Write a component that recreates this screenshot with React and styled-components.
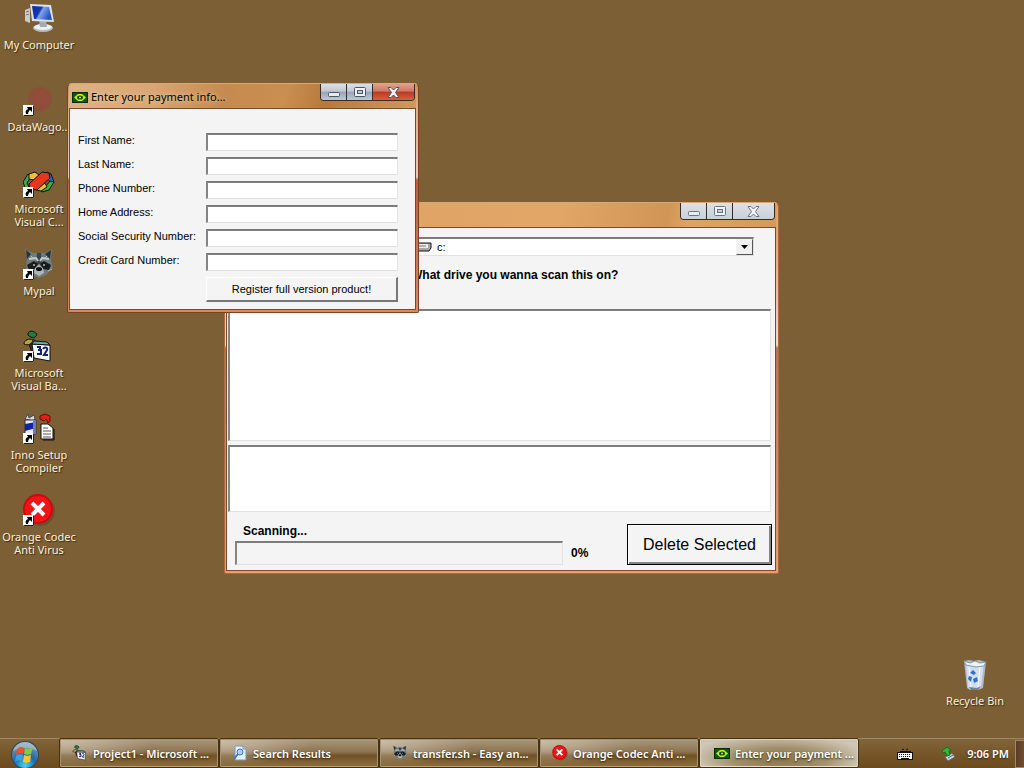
import React from "react";
import styled, { createGlobalStyle, css } from "styled-components";

const SEGOE = '"Noto Sans", "Open Sans", sans-serif';
const CLASSIC = '"Liberation Sans", Arial, sans-serif';

const GlobalStyle = createGlobalStyle`
  * { box-sizing: border-box; }
  body { margin: 0; background: #7c5f35; }
  button, input, select { font: inherit; color: inherit; margin: 0; }
`;

const Screen = styled.div`
  min-height: 100vh;
  display: flex;
  flex-direction: column;
  background: #7c5f35;
  font-family: ${SEGOE};
  font-size: 11px;
`;

const Desktop = styled.main`
  position: relative;
  flex: 1;
  display: flex;
  justify-content: space-between;
`;

const IconColumn = styled.div`
  display: flex;
  flex-direction: column;
  justify-content: ${(p) => (p.$bottom ? "flex-end" : "flex-start")};
  padding-right: ${(p) => (p.$bottom ? "10px" : "0")};
`;

const Shortcut = styled.a`
  width: 78px;
  height: 82px;
  padding-top: 2px;
  display: flex;
  flex-direction: column;
  align-items: center;
  gap: 3px;
  color: #fbf1dc;
  text-decoration: none;
  text-align: center;
  line-height: 13px;
  white-space: pre;
  text-shadow: 1px 1px 1px #3c2a10;

  svg { flex: none; }
`;

/* ---------- windows ---------- */

const Window = styled.section`
  position: absolute;
  left: ${(p) => p.$x}px;
  top: ${(p) => p.$y}px;
  width: ${(p) => p.$w}px;
  padding: 0 2px 2px 1px;
  border: 1px solid ${(p) => (p.$active ? "#80401f" : "#b0683f")};
  border-top-color: #d8a878;
  border-radius: 5px 5px 2px 2px;
  background: ${(p) =>
    p.$active
      ? "linear-gradient(#cd9256 0, #dcb48c 26px, #e6cdbb 93px, #b9613f 96px, #d58a62 100%)"
      : "linear-gradient(#dfa363 0, #dfa76c 24px, #f0dccb 142px, #bf7058 145px, #e8a070 100%)"};
  color: #000;
`;

const TitleBar = styled.header`
  height: ${(p) => (p.$active ? 24 : 24)}px;
  display: flex;
  align-items: flex-start;
  justify-content: space-between;
  padding: 0 1px 0 3px;
  border-radius: 4px 4px 0 0;
  background: ${(p) =>
    p.$active
      ? "linear-gradient(100deg, #dcb386 0, #d9a673 24%, #c58a4f 45%, #c98f50 62%, #b67b3c 74%, #d09a5c 100%)"
      : "linear-gradient(100deg, #dba265 0, #e2a767 60%, #cf9656 80%, #dfa465 84%, #d39a5b 100%)"};
`;

const Title = styled.h1`
  margin: 0;
  padding-top: 5px;
  display: flex;
  align-items: center;
  gap: 3px;
  font-size: 11px;
  line-height: 16px;
  font-weight: 400;
  text-shadow: 0 0 4px #f3dcc0;
`;

const Captions = styled.div`
  display: flex;
  margin-left: auto;
  border: 1px solid #3a2a28;
  border-top: 0;
  border-radius: 0 0 4px 4px;
  overflow: hidden;
`;

const CaptionButton = styled.button`
  width: ${(p) => (p.$wide ? 41 : 26)}px;
  height: 16px;
  padding: 0;
  display: grid;
  place-items: center;
  border: 0;
  border-right: ${(p) => (p.$wide ? "0" : "1px solid #3a2a28")};
  background: ${(p) =>
    !p.$active
      ? "linear-gradient(#dde1e6, #c9d0d9)"
      : p.$wide
      ? "linear-gradient(#e0a090 0, #cf7660 45%, #b93a22 50%, #d9603f 100%)"
      : "linear-gradient(#dcdfe6 0, #c3c6ce 45%, #9aa3b5 50%, #bccadb 100%)"};
`;

const Client = styled.div`
  border: 1px solid #7d4a2a;
  background: #f4f4f4;
  font-family: ${CLASSIC};
`;

const sunken = css`
  border: 1px solid #e2e2e2;
  border-top: 2px solid #7c7c7c;
  border-left: 2px solid #858585;
  border-radius: 0;
  outline: 0;
`;

const PaymentForm = styled.form`
  display: grid;
  grid-template-columns: 128px 1fr;
  row-gap: 6px;
  padding: 24px 17px 7px 8px;
`;

const FieldLabel = styled.label`
  line-height: 14px;
`;

const TextBox = styled.input`
  ${sunken}
  width: 100%;
  height: 18px;
  padding: 0 2px;
  background: #fff;
`;

const RegisterButton = styled.button`
  grid-column: 2;
  height: 25px;
  padding: 0;
  border: 1px solid #fff;
  border-right: 2px solid #777;
  border-bottom: 2px solid #777;
  background: #f4f4f4;
`;

const ScanPanel = styled(Client)`
  display: flex;
  flex-direction: column;
  padding: 9px 0 5px;
`;

const DriveRow = styled.div`
  display: flex;
  flex-direction: column;
  gap: 12px;
  margin: 0 21px 27px 184px;
`;

const DriveBox = styled.div`
  ${sunken}
  height: 19px;
  display: flex;
  align-items: center;
  background: #fff;
`;

const DriveSelect = styled.select`
  flex: 1;
  min-width: 0;
  height: 16px;
  padding: 0 5px;
  border: 0;
  outline: 0;
  appearance: none;
  background: transparent;
  line-height: 16px;
`;

const DropArrow = styled.span`
  width: 17px;
  height: 16px;
  display: grid;
  place-items: center;
  border: 1px solid #f4f4f4;
  border-right-color: #555;
  border-bottom-color: #555;
  background: #f0f0f0;
`;

const BoldText = styled.label`
  font-size: 12px;
  line-height: 14px;
  font-weight: 700;
`;

const ListBox = styled.select`
  ${sunken}
  display: block;
  height: ${(p) => p.$h}px;
  margin: 0 4px 4px 1px;
  appearance: none;
  background: #fff;
`;

const ScanFooter = styled.div`
  display: flex;
  padding: 8px 3px 0 8px;
`;

const ScanStatus = styled.div`
  flex: 1;
  display: flex;
  flex-direction: column;
  gap: 3px;

  > label { padding-left: 8px; }
`;

const ProgressRow = styled.div`
  display: flex;
  align-items: center;
  gap: 8px;
`;

const Progress = styled.progress`
  ${sunken}
  flex: 1;
  width: 0;
  height: 24px;
  appearance: none;
  background: #f4f4f4;

  &::-webkit-progress-bar { background: transparent; }
  &::-webkit-progress-value { background: #000080; }
`;

const Percent = styled.output`
  width: 56px;
  font-size: 12px;
  font-weight: 700;
`;

const DeleteButton = styled.button`
  width: 145px;
  height: 41px;
  padding: 0;
  border: 1px solid #000;
  background: #f4f4f4;
  box-shadow: inset 1px 1px #fff, inset -2px -2px #858585;
  font-size: 16px;
`;

/* ---------- taskbar ---------- */

const Taskbar = styled.footer`
  height: 30px;
  display: flex;
  align-items: stretch;
  border-top: 1px solid #9d8662;
  background: linear-gradient(#82643a, #76572a 50%, #6b4b1e);
  color: #fff;
`;

const StartButton = styled.button`
  width: 60px;
  padding: 0 0 0 11px;
  display: flex;
  align-items: flex-start;
  border: 0;
  background: none;
`;

const Tasks = styled.nav`
  flex: 1;
  min-width: 0;
  display: flex;
  gap: 2px;
`;

const TaskButton = styled.button`
  flex: 0 1 158px;
  min-width: 0;
  height: 28px;
  padding: 0 8px 0 ${(p) => (p.$active ? 13 : 11)}px;
  display: flex;
  align-items: center;
  gap: 5px;
  border: 1px solid ${(p) => (p.$active ? "#d9d2c4" : "#a89373")};
  border-bottom-color: ${(p) => (p.$active ? "#e6dfd0" : "#b8a078")};
  border-radius: 1px;
  outline: 1px solid #46300f;
  background: ${(p) =>
    p.$active
      ? "radial-gradient(ellipse 60% 90% at 50% 75%, #8a7449 0, #a0906c 50%, transparent 100%), linear-gradient(#cbc2b0, #e0dacd)"
      : "radial-gradient(ellipse 60% 100% at 0 0, #c9bda8 0, transparent 100%), linear-gradient(#a8967a 0, #8c7350 45%, #705226 60%, #8a6c3d 100%)"};
  font-weight: 600;
  text-shadow: 0 1px 2px #2f1f08;
  white-space: nowrap;

  svg { flex: none; }
`;

const Tray = styled.div`
  display: flex;
  align-items: center;
  font-weight: 600;
  text-shadow: 0 1px 2px #2f1f08;

  > svg { margin-right: 28px; }
  > svg + svg { margin-right: 10px; }
`;

const ShowDesktop = styled.button`
  width: 9px;
  height: 28px;
  margin-left: 6px;
  padding: 0;
  border: 1px solid #a08a66;
  border-right: 0;
  background: linear-gradient(90deg, #5a3b26, #6f4e30);
`;

/* ---------- drawings ---------- */

const ArrowBadge = () => (
  <g>
    <rect x="0" y="21" width="11" height="11" fill="#fff" />
    <path d="M.5 31.500h10v-10" fill="none" stroke="#222" />
    <path d="M4 23h5v5l-2-2c-1 1-2 2-2 4H3c-1-3 0-4 2-5z" fill="#000" />
  </g>
);

const Icon = ({ children, badge = true }) => (
  <svg width="32" height="33" viewBox="0 0 32 33" aria-hidden="true">
    {children}
    {badge && <ArrowBadge />}
  </svg>
);

const ComputerIcon = () => (
  <Icon badge={false}>
    <defs>
      <linearGradient id="screen" x1="0" y1="0" x2="1" y2=".4">
        <stop offset="0" stopColor="#0c2c98" />
        <stop offset=".45" stopColor="#1238b8" />
        <stop offset=".55" stopColor="#7ea6ec" />
        <stop offset="1" stopColor="#2450cc" />
      </linearGradient>
    </defs>
    <path d="M2 8l5-2v15l-5-2z" fill="#c5ccd2" />
    <path d="M3 10l3-1M3 13l3-1" stroke="#6d7780" />
    <ellipse cx="20" cy="26" rx="10" ry="4" fill="#b6bbbf" />
    <ellipse cx="20" cy="25" rx="9" ry="3" fill="#eef1f3" />
    <path d="M16 18h7l1 7h-7z" fill="#a4abb2" />
    <path d="M7 2l21 1 3 17-22-1z" fill="#dbe1e6" />
    <path d="M9 4l17 1 3 13-18-1z" fill="url(#screen)" />
  </Icon>
);

const DataIcon = () => (
  <Icon>
    <circle cx="17" cy="15" r="12" fill="#93483a" opacity=".7" />
    <circle cx="18" cy="15" r="8" fill="#a04b3f" opacity=".4" />
  </Icon>
);

const VisualCIcon = () => (
  <Icon>
    <g stroke="#111" strokeWidth="1" strokeLinejoin="round">
      <path d="M0 16l5-8 3 2-4 7 3 6-4 1z" fill="#38b04a" />
      <path d="M6 8l6-2 4 3-5 5-5-1z" fill="#f2c038" />
      <path d="M24 6l4 2 3 8-3 2-4-7z" fill="#2468d8" />
      <path d="M31 16l-5 8-7 2-2-4 6-2 4-5z" fill="#3fae45" />
      <path d="M16 20l6-3 2 4-6 4-5-1z" fill="#f2c038" />
      <path d="M6 18L19 6l7 1 1 5-13 12-7-1z" fill="#e8361c" />
    </g>
  </Icon>
);

const RaccoonFace = () => (
  <g>
    <path d="M2 1l8 4h12l7-4-1 11 2 7-7 8-7 3-7-3-6-8 1-8z" fill="#6e7c80" />
    <path d="M3 2l5 4-4 5zM28 2l-6 4 5 5z" fill="#28343a" />
    <path d="M14 5h4l1 11h-6z" fill="#3a4449" />
    <path d="M6 11l7-1 2 3M26 11l-7-1-2 3" fill="none" stroke="#c3cbc9" strokeWidth="2" />
    <path d="M4 17l7-4 4 3-3 5-6 1zM28 17l-7-4-4 3 3 5 6 1z" fill="#161c20" />
    <circle cx="11" cy="17" r="1" fill="#c8b890" />
    <circle cx="21" cy="17" r="1" fill="#c8b890" />
    <path d="M12 20l4-3 4 3 1 5-5 3-5-3z" fill="#aeb7b4" />
    <ellipse cx="16" cy="21" rx="3" ry="2" fill="#0a0a0a" />
    <path d="M3 21l4 2M29 21l-4 2M8 8l2 2M24 8l-2 2" stroke="#b7c0be" />
  </g>
);

const VisualBasicArt = () => (
  <g>
    <path d="M6 14l3 9h5l-2-10z" fill="#5c1d1d" stroke="#111" />
    <path d="M5 3c2-3 6-2 9 1-1 4-5 5-9 1z" fill="#267a3d" stroke="#111" />
    <path d="M1 14c0-4 5-6 9-4-1 4-5 6-9 4z" fill="#b8a04a" stroke="#111" />
    <path d="M10 9l4 3" stroke="#111" />
    <path d="M9 14l18 1v16l-16-3z" fill="#f4fafa" stroke="#111" />
    <path d="M9 14l18 1-3-3-13-1z" fill="#57b7b0" stroke="#111" />
    <path d="M14 17h3v3h-2h3v4h-4M20 19c2-3 5-1 4 1l-3 5h4" fill="none" stroke="#18206e" strokeWidth="2" />
  </g>
);

const InnoIcon = () => (
  <Icon>
    <path d="M2 7l3-5 1 4 5-3 1 4-2 2z" fill="#d9dce8" stroke="#445" />
    <path d="M2 8h11v14H2z" fill="#e8eaf2" stroke="#333" />
    <path d="M2 12l11-2v6l-11 3z" fill="#1423b0" />
    <path d="M10 8h3v14h-3z" fill="#7078b8" />
    <path d="M17 4l5-2 5 2v5l-2 2-2-4-2 2-4-2z" fill="#e51c12" stroke="#5a1008" />
    <path d="M18 12h7l5 4v11H18z" fill="#fff" stroke="#111" />
    <path d="M20 16h5M20 19h8M20 22h8M20 25h8" stroke="#555" />
    <path d="M31 17v11H20" fill="none" stroke="#111" />
  </Icon>
);

const ErrorArt = () => (
  <g>
    <circle cx="17" cy="17" r="15" fill="#5c4630" opacity=".6" />
    <circle cx="15" cy="15" r="15" fill="#d3060c" />
    <circle cx="15" cy="15" r="13" fill="#ee1519" />
    <path d="M9 9l12 12M21 9L9 21" stroke="#fff" strokeWidth="4" />
  </g>
);

const BinIcon = () => (
  <Icon badge={false}>
    <path d="M5 3l5-1 5 1 5-1 7 2-3 26-5 2H11l-3-2z" fill="#a9bccd" />
    <path d="M7 6l18-1-3 24-4 2h-7l-2-2z" fill="#d2dfeb" />
    <path d="M5 3l6 2 5-2 5 2 6-1-2 4-8 1-10-2z" fill="#eef3f6" stroke="#8797a5" />
    <path d="M10 9l2 20M21 9l-2 20" stroke="#f7fbff" />
    <path d="M11 15l3-3 3 3-2 2zM10 18l3 1-1 5-3-3zM14 21l4-2 1 4-4 2z" fill="#2f6fd0" />
    <path d="M10 29l8 1 4-2-3 4h-7z" fill="#738390" />
  </Icon>
);

const EyeIcon = () => (
  <svg width="16" height="11" viewBox="0 0 16 11" aria-hidden="true">
    <rect x=".5" y=".5" width="15" height="10" fill="#0a5a14" stroke="#052d08" />
    <path d="M2 5.500L6 2h4l4 3.500L10 9H6z" fill="#c8e81e" />
    <ellipse cx="8" cy="5.500" rx="3" ry="2" fill="#0c4a12" />
    <circle cx="8" cy="5.500" r="1" fill="#d9e81e" />
  </svg>
);

const SmallIcon = ({ children, box = "0 0 32 33" }) => (
  <svg width="16" height="16" viewBox={box} aria-hidden="true">
    {children}
  </svg>
);

const SearchPageArt = () => (
  <g>
    <path d="M3 1h8l3 3v11H3z" fill="#e6f0fa" stroke="#7a98b8" />
    <path d="M11 1v3h3" fill="#b6d0ea" stroke="#7a98b8" />
    <circle cx="8" cy="7" r="3" fill="#a9d2f5" stroke="#3d78b8" />
    <path d="M6 9l-4 5" stroke="#3d78b8" strokeWidth="2" />
  </g>
);

const StartOrb = () => (
  <svg width="30" height="29" viewBox="0 0 30 29" aria-hidden="true">
    <defs>
      <radialGradient id="orb" cx=".5" cy=".9" r=".9">
        <stop offset="0" stopColor="#45d8f5" />
        <stop offset=".45" stopColor="#1c6aa8" />
        <stop offset="1" stopColor="#8a9eae" />
      </radialGradient>
    </defs>
    <circle cx="14" cy="16" r="14" fill="#2c4458" />
    <circle cx="14" cy="16" r="13" fill="url(#orb)" />
    <path d="M2 12c4-12 20-12 24 0-7-4-17-4-24 0z" fill="#d5e2ea" opacity=".45" />
    <path d="M6 10c3-3 5-2 7-1l-1 6c-2-1-4-1-7 1z" fill="#f0502a" />
    <path d="M14 9c2 1 5 1 8-1l-2 7c-2 1-5 1-7 0z" fill="#8bc63e" />
    <path d="M5 17c2-2 5-2 7-1l-1 6c-2-1-5-1-7 1z" fill="#3aa0e8" />
    <path d="M13 16c2 1 5 1 7 0l-1 7c-2 1-5 1-7 0z" fill="#fcc42a" />
  </svg>
);

const KeyboardIcon = () => (
  <svg width="16" height="14" viewBox="0 0 16 14" aria-hidden="true">
    <path d="M3 4.500h11M5 3l2-1M9 3l2-1" fill="none" stroke="#111" />
    <rect x=".5" y="5.500" width="15" height="7" fill="#f4f4f4" stroke="#111" />
    <path d="M2 7.500h12M2 9.500h12" stroke="#111" strokeDasharray="1 1" />
    <path d="M4 11.500h8" stroke="#111" />
  </svg>
);

const DeviceIcon = () => (
  <svg width="16" height="16" viewBox="0 0 16 16" aria-hidden="true">
    <path d="M4 11l7-4 3 4-7 4z" fill="#cfd6da" stroke="#5b646a" />
    <path d="M7 12l5-3" stroke="#596268" />
    <path d="M1 5l5-4 4 3-2 1 1 4-3 1-2-4-2 1z" fill="#35b53a" stroke="#176c1c" />
  </svg>
);

const DriveIcon = () => (
  <svg width="19" height="12" viewBox="0 0 19 12" aria-hidden="true">
    <path d="M1 3l2-1h15v5l-2 3H1z" fill="#a8a8a8" stroke="#111" />
    <path d="M1 3h14v4H1z" fill="#ececec" />
    <path d="M2 5h11" stroke="#777" />
  </svg>
);

const captionStroke = (active) => (active ? "#4c5566" : "#6b7485");

const WindowButtons = ({ active }) => (
  <Captions>
    <CaptionButton $active={active} type="button" aria-label="Minimize">
      <svg width="12" height="12" viewBox="0 0 12 12">
        <rect x=".5" y="6.500" width="11" height="4" rx="1" fill="#e8eaee" stroke={captionStroke(active)} />
      </svg>
    </CaptionButton>
    <CaptionButton $active={active} type="button" aria-label="Maximize">
      <svg width="12" height="10" viewBox="0 0 12 10">
        <rect x=".5" y=".5" width="11" height="9" rx="1" fill="#f0f1f4" stroke={captionStroke(active)} />
        <rect x="3.500" y="3.500" width="5" height="3" fill="#c7ccd6" stroke={captionStroke(active)} />
      </svg>
    </CaptionButton>
    <CaptionButton $active={active} $wide type="button" aria-label="Close">
      <svg width="13" height="11" viewBox="0 0 13 11">
        <path
          d="M1 .5h3l2.500 2.500L9 .5h3L8.500 5.500l3.500 5H9L6.500 8 4 10.500H1l3.500-5z"
          fill="#f4f4f6"
          stroke={captionStroke(active)}
        />
      </svg>
    </CaptionButton>
  </Captions>
);

/* ---------- content ---------- */

const shortcuts = [
  { label: "My Computer", icon: <ComputerIcon /> },
  { label: "DataWago...", icon: <DataIcon /> },
  { label: "Microsoft\nVisual C...", icon: <VisualCIcon /> },
  { label: "Mypal", icon: <Icon><RaccoonFace /></Icon> },
  { label: "Microsoft\nVisual Ba...", icon: <Icon><VisualBasicArt /></Icon> },
  { label: "Inno Setup\nCompiler", icon: <InnoIcon /> },
  { label: "Orange Codec\nAnti Virus", icon: <Icon><ErrorArt /></Icon> },
];

const fields = [
  ["first", "First Name:"],
  ["last", "Last Name:"],
  ["phone", "Phone Number:"],
  ["address", "Home Address:"],
  ["ssn", "Social Security Number:"],
  ["card", "Credit Card Number:"],
];

const tasks = [
  { label: "Project1 - Microsoft ...", icon: <SmallIcon><VisualBasicArt /></SmallIcon> },
  { label: "Search Results", icon: <SmallIcon box="0 0 16 16"><SearchPageArt /></SmallIcon> },
  { label: "transfer.sh - Easy an...", icon: <SmallIcon><RaccoonFace /></SmallIcon> },
  { label: "Orange Codec Anti ...", icon: <SmallIcon><ErrorArt /></SmallIcon> },
  { label: "Enter your payment ...", icon: <EyeIcon />, active: true },
];

const ScannerWindow = () => (
  <Window $x={224} $y={202} $w={555} aria-label="Orange Codec Anti Virus">
    <TitleBar>
      <WindowButtons />
    </TitleBar>
    <ScanPanel>
      <DriveRow>
        <DriveBox>
          <DriveIcon />
          <DriveSelect id="drive" defaultValue="c">
            <option value="c">c:</option>
          </DriveSelect>
          <DropArrow>
            <svg width="7" height="4" viewBox="0 0 7 4" aria-hidden="true">
              <path d="M0 0h7L3.500 4z" />
            </svg>
          </DropArrow>
        </DriveBox>
        <BoldText htmlFor="drive">What drive you wanna scan this on?</BoldText>
      </DriveRow>
      <ListBox $h={132} size={2} aria-label="Files" />
      <ListBox $h={67} size={2} aria-label="Threats" />
      <ScanFooter>
        <ScanStatus>
          <BoldText htmlFor="scan-progress">Scanning...</BoldText>
          <ProgressRow>
            <Progress id="scan-progress" value={0} max={100} />
            <Percent htmlFor="scan-progress">0%</Percent>
          </ProgressRow>
        </ScanStatus>
        <DeleteButton type="button">Delete Selected</DeleteButton>
      </ScanFooter>
    </ScanPanel>
  </Window>
);

const PaymentWindow = () => (
  <Window $x={67} $y={83} $w={352} $active>
    <TitleBar $active>
      <Title>
        <EyeIcon />
        Enter your payment info...
      </Title>
      <WindowButtons active />
    </TitleBar>
    <Client>
      <PaymentForm onSubmit={(e) => e.preventDefault()}>
        {fields.map(([id, label]) => (
          <React.Fragment key={id}>
            <FieldLabel htmlFor={id}>{label}</FieldLabel>
            <TextBox id={id} type="text" autoComplete="off" />
          </React.Fragment>
        ))}
        <RegisterButton type="submit">Register full version product!</RegisterButton>
      </PaymentForm>
    </Client>
  </Window>
);

export default function App() {
  return (
    <Screen>
      <GlobalStyle />
      <Desktop>
        <IconColumn>
          {shortcuts.map((s) => (
            <Shortcut key={s.label} href="#">
              {s.icon}
              <span>{s.label}</span>
            </Shortcut>
          ))}
        </IconColumn>
        <IconColumn $bottom>
          <Shortcut href="#">
            <BinIcon />
            <span>Recycle Bin</span>
          </Shortcut>
        </IconColumn>
        <ScannerWindow />
        <PaymentWindow />
      </Desktop>
      <Taskbar>
        <StartButton type="button" aria-label="Start">
          <StartOrb />
        </StartButton>
        <Tasks>
          {tasks.map((t) => (
            <TaskButton key={t.label} type="button" $active={t.active}>
              {t.icon}
              <span>{t.label}</span>
            </TaskButton>
          ))}
        </Tasks>
        <Tray>
          <KeyboardIcon />
          <DeviceIcon />
          <time>9:06 PM</time>
          <ShowDesktop type="button" aria-label="Show desktop" />
        </Tray>
      </Taskbar>
    </Screen>
  );
}
